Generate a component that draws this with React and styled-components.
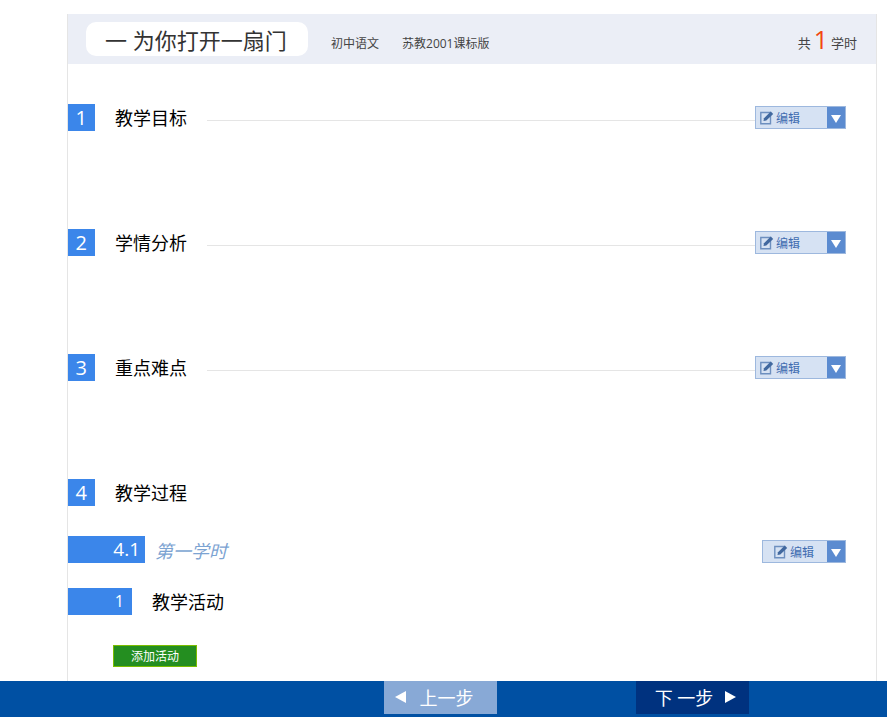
import styled, { createGlobalStyle } from "styled-components";

const GlobalStyle = createGlobalStyle`
  html, body {
    margin: 0;
    padding: 0;
    background: #fff;
    font-family: "Open Sans", "Noto Sans CJK SC", sans-serif;
  }
`;

const Page = styled.div`
  display: flex;
  flex-direction: column;
  height: 717px;
  overflow: hidden;
`;

const Main = styled.div`
  flex: 1;
  min-height: 0;
  box-sizing: border-box;
  width: 810px;
  margin: 14px 0 0 67px;
  border-left: 1px solid #e5e5e5;
  border-right: 1px solid #e5e5e5;
`;

const Header = styled.div`
  display: flex;
  align-items: center;
  height: 50px;
  background: #ebeef6;
  padding: 0 19px 0 18px;
`;

const TitlePill = styled.div`
  box-sizing: border-box;
  width: 222px;
  height: 34px;
  padding: 1px 0 0 19px;
  background: #fff;
  border-radius: 10px;
  font-size: 22px;
  line-height: 34px;
  color: #333;
  white-space: nowrap;
`;

const Meta = styled.span`
  font-size: 12px;
  color: #444;
  margin-left: ${(p) => p.$gap}px;
  margin-top: 8px;
`;

const Hours = styled.div`
  margin-left: auto;
  display: flex;
  align-items: center;
  gap: 3px;
  font-size: 13px;
  color: #444;
  margin-top: 6px;
`;

const HoursNum = styled.span`
  font-size: 25px;
  line-height: 24px;
  color: #f2470f;
  margin-top: -7px;
`;

const Content = styled.div`
  padding-top: 40px;
`;

const Row = styled.div`
  display: flex;
  align-items: center;
  height: 27px;
  margin-bottom: ${(p) => p.$after}px;
`;

const NumTag = styled.div`
  box-sizing: border-box;
  width: ${(p) => p.$w}px;
  height: 27px;
  padding-right: ${(p) => p.$pr}px;
  background: #3b86ea;
  color: #fff;
  font-size: ${(p) => p.$size}px;
  line-height: 27px;
  text-align: right;
  flex: none;
`;

const SectionTitle = styled.div`
  box-sizing: border-box;
  margin-left: ${(p) => p.$left}px;
  width: 72px;
  height: 27px;
  padding-top: 1px;
  font-size: 18px;
  line-height: 27px;
  color: #000;
  white-space: nowrap;
  flex: none;
`;

const Rule = styled.div`
  flex: 1;
  height: 1px;
  margin: 6px 0 0 20px;
  background: #e5e5e5;
`;

const EditBtn = styled.div`
  box-sizing: border-box;
  display: flex;
  align-items: stretch;
  width: ${(p) => p.$w}px;
  height: 23px;
  margin: ${(p) => p.$top}px 30px 0 ${(p) => (p.$push ? "auto" : "0")};
  border: 1px solid #9db8de;
  background: #d6e2f3;
  flex: none;
`;

const EditLabel = styled.div`
  flex: 1;
  display: flex;
  align-items: center;
  gap: 2px;
  padding-left: ${(p) => p.$pl}px;
  font-size: 12px;
  color: #3f6cb0;
`;

const Caret = styled.div`
  width: 18px;
  display: flex;
  align-items: center;
  justify-content: center;
  background: #5b8bd0;
`;

const Triangle = styled.div`
  width: 0;
  height: 0;
  margin-top: 2px;
  border-left: 5px solid transparent;
  border-right: 5px solid transparent;
  border-top: 8px solid #fff;
`;

const Lesson = styled.div`
  margin-left: 10px;
  font-size: 18px;
  font-style: italic;
  color: #7ca3d2;
`;

const AddBtn = styled.button`
  display: block;
  box-sizing: border-box;
  width: 84px;
  height: 22px;
  margin-left: 45px;
  padding: 1px 0 0;
  border: 1px solid #7cbd00;
  background: #248e20;
  color: #fff;
  font-family: inherit;
  font-size: 12px;
  line-height: 20px;
`;

const Footer = styled.div`
  display: flex;
  height: 36px;
  flex: none;
  background: #0050a3;
  padding-left: 384px;
`;

const StepBtn = styled.div`
  box-sizing: border-box;
  display: flex;
  align-items: center;
  justify-content: center;
  gap: ${(p) => p.$gap}px;
  width: 113px;
  height: 33px;
  padding: 0 ${(p) => p.$pr}px 2px ${(p) => p.$pl}px;
  margin-right: ${(p) => p.$mr}px;
  background: ${(p) => p.$bg};
  color: #fff;
  font-size: 18px;
  white-space: nowrap;
`;

const Arrow = styled.div`
  width: 0;
  height: 0;
  border-top: 6px solid transparent;
  border-bottom: 6px solid transparent;
  ${(p) => (p.$left ? "border-right: 11px solid #fff;" : "border-left: 11px solid #fff;")}
`;

function EditIcon() {
  return (
    <svg width="14" height="14" viewBox="0 0 14 14" fill="none">
      <path d="M0.8 1.5H10.5V12.8H0.8Z" stroke="#6d8fbf" strokeWidth="1.4" />
      <path d="M3.5 10L4 7.3L10.8 0.6L13.2 3L6.3 9.6Z" fill="#41689f" />
    </svg>
  );
}

function Edit({ w = 91, pl = 4, top = 0, push }) {
  return (
    <EditBtn $w={w} $top={top} $push={push}>
      <EditLabel $pl={pl}>
        <EditIcon />
        编辑
      </EditLabel>
      <Caret>
        <Triangle />
      </Caret>
    </EditBtn>
  );
}

const sections = [
  { num: 1, title: "教学目标" },
  { num: 2, title: "学情分析" },
  { num: 3, title: "重点难点" },
];

export default function App() {
  return (
    <Page>
      <GlobalStyle />
      <Main>
        <Header>
          <TitlePill>一 为你打开一扇门</TitlePill>
          <Meta $gap={23}>初中语文</Meta>
          <Meta $gap={23}>苏教2001课标版</Meta>
          <Hours>
            共<HoursNum>1</HoursNum>学时
          </Hours>
        </Header>
        <Content>
          {sections.map((s) => (
            <Row key={s.num} $after={98}>
              <NumTag $w={27} $pr={8} $size={20}>{s.num}</NumTag>
              <SectionTitle $left={20}>{s.title}</SectionTitle>
              <Rule />
              <Edit />
            </Row>
          ))}
          <Row $after={30}>
            <NumTag $w={27} $pr={8} $size={20}>4</NumTag>
            <SectionTitle $left={20}>教学过程</SectionTitle>
          </Row>
          <Row $after={25}>
            <NumTag $w={77} $pr={5} $size={19}>4.1</NumTag>
            <Lesson>第一学时</Lesson>
            <Edit w={84} pl={11} top={4} push />
          </Row>
          <Row $after={30}>
            <NumTag $w={64} $pr={8} $size={16}>1</NumTag>
            <SectionTitle $left={20}>教学活动</SectionTitle>
          </Row>
          <AddBtn>添加活动</AddBtn>
        </Content>
      </Main>
      <Footer>
        <StepBtn $bg="#88a9d6" $mr={139} $gap={14} $pl={0} $pr={13}>
          <Arrow $left />
          上一步
        </StepBtn>
        <StepBtn $bg="#00327f" $mr={0} $gap={12} $pl={6} $pr={0}>
          下 一步
          <Arrow />
        </StepBtn>
      </Footer>
    </Page>
  );
}
